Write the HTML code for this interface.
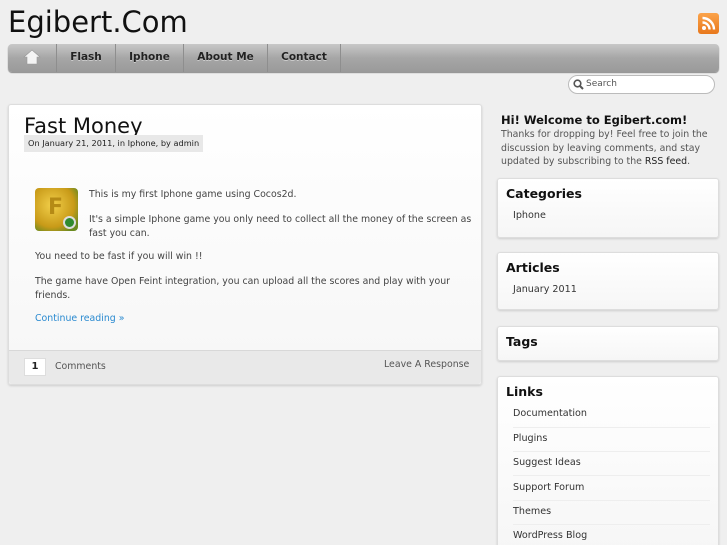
<!DOCTYPE html>
<html style="width:727px;height:545px;overflow:hidden"><head><style>
*{margin:0;padding:0;box-sizing:border-box}
body{width:727px;height:545px;overflow:hidden;background:#efefef;font-family:"DejaVu Sans",sans-serif;color:#444;position:relative}
.a{position:absolute}
#logo{left:8px;top:5px;font-size:29px;color:#111}
#rss{left:698px;top:13px;width:21px;height:21px;border-radius:3px;background:linear-gradient(#fba34a,#e8781c)}
#nav{left:8px;top:44px;width:711px;height:28px;border-radius:4px;background:linear-gradient(#c8c8c8,#a6a6a6 50%,#9a9a9a);box-shadow:0 1px 1px #888}
#nav div{position:absolute;top:0;height:28px;line-height:27px;font-size:10.5px;font-weight:bold;color:#222;text-align:center;border-right:1px solid #8e8e8e;text-shadow:0 1px 0 #ccc}
#search{left:568px;top:75px;width:147px;height:19px;border:1px solid #bbb;border-radius:10px;background:#fff;font-size:9px;color:#555;padding:3px 0 0 17px}
.box{background:linear-gradient(#fff,#f6f6f6);border:1px solid #ddd;border-radius:3px;box-shadow:0 1px 2px #ccc}
#post{left:8px;top:104px;width:474px;height:281px}
p{font-size:9.4px;color:#444}
.side h3{font-size:12.5px;color:#111;font-weight:bold;margin:0 0 0 8px}
.li{font-size:9.6px;color:#333;position:absolute;left:15px}
.sep{position:absolute;left:15px;right:8px;height:1px;background:#eee}
</style></head><body>
<div class="a" id="logo">Egibert.Com</div>
<div class="a" id="rss"><svg width="21" height="21" viewBox="0 0 21 21"><circle cx="6" cy="15" r="2" fill="#fff"/><path d="M4.5 9.5a7 7 0 0 1 7 7M4.5 5a11.5 11.5 0 0 1 11.5 11.5" stroke="#fff" stroke-width="2.4" fill="none"/></svg></div>
<div class="a" id="nav">
<div style="left:0;width:49px"><svg width="18" height="16" viewBox="0 0 18 16" style="margin-top:5px"><path d="M1 8L9 1l8 7h-3v7H4V8z" fill="#f4f4f4" stroke="#999" stroke-width=".6"/></svg></div>
<div style="left:49px;width:59px">Flash</div>
<div style="left:108px;width:68px">Iphone</div>
<div style="left:176px;width:84px">About Me</div>
<div style="left:260px;width:73px">Contact</div>
</div>
<div class="a" id="search"><svg class="a" style="left:4px;top:3px" width="11" height="11" viewBox="0 0 11 11"><circle cx="4.5" cy="4.5" r="3.3" stroke="#555" stroke-width="1.6" fill="none"/><path d="M7 7l3 3" stroke="#555" stroke-width="2"/></svg>Search</div>

<div class="a box" id="post">
<div class="a" style="left:15px;top:9px;font-size:21px;color:#111">Fast Money</div>
<div class="a" style="left:15px;top:30px;background:#e8e8e8;font-size:8.2px;color:#222;padding:3px 4px 4px">On January 21, 2011, in Iphone, by admin</div>
<div class="a" style="left:26px;top:83px;width:43px;height:43px;border-radius:4px;background:radial-gradient(circle at 40% 40%,#f2cf4a,#c89a18 60%,#6a8a20 85%)"><span style="position:absolute;left:13px;top:7px;font-size:22px;font-weight:bold;color:#b58a15">F</span><span style="position:absolute;right:2px;bottom:2px;width:13px;height:13px;border-radius:50%;background:#2f8a2f;border:2px solid #ddd"></span></div>
<p class="a" style="left:80px;top:84px">This is my first Iphone game using Cocos2d.</p>
<p class="a" style="left:80px;top:108px;width:390px;line-height:13.5px">It's a simple Iphone game you only need to collect all the money of the screen as fast you can.</p>
<p class="a" style="left:26px;top:146px">You need to be fast if you will win !!</p>
<p class="a" style="left:26px;top:170px;width:430px;line-height:13.5px">The game have Open Feint integration, you can upload all the scores and play with your friends.</p>
<p class="a" style="left:26px;top:208px;color:#2a8ad0">Continue reading »</p>
<div class="a" style="left:0;top:245px;width:472px;height:34px;background:#e9e9e9;border-top:1px solid #d8d8d8;border-radius:0 0 3px 3px"></div>
<div class="a" style="left:15px;top:253px;width:22px;height:18px;background:#fff;border:1px solid #ddd;font-size:10px;font-weight:bold;color:#222;text-align:center;line-height:16px">1</div>
<p class="a" style="left:46px;top:256px;color:#555">Comments</p>
<p class="a" style="left:375px;top:254px;color:#555">Leave A Response</p>
</div>

<div class="a" style="left:501px;top:113px;font-size:11.5px;font-weight:bold;color:#111">Hi! Welcome to Egibert.com!</div>
<p class="a" style="left:501px;top:128px;width:220px;line-height:13.5px;font-size:9.4px;color:#555">Thanks for dropping by! Feel free to join the discussion by leaving comments, and stay updated by subscribing to the <b style="font-weight:normal;color:#222">RSS feed</b>.</p>

<div class="a box side" style="left:497px;top:178px;width:222px;height:60px"><h3 style="margin-top:7px">Categories</h3><div class="li" style="top:31px">Iphone</div></div>
<div class="a box side" style="left:497px;top:252px;width:222px;height:58px"><h3 style="margin-top:7px">Articles</h3><div class="li" style="top:31px">January 2011</div></div>
<div class="a box side" style="left:497px;top:326px;width:222px;height:35px"><h3 style="margin-top:7px">Tags</h3></div>
<div class="a box side" style="left:497px;top:376px;width:222px;height:180px"><h3 style="margin-top:7px">Links</h3>
<div class="li" style="top:31px">Documentation</div><div class="sep" style="top:50px"></div>
<div class="li" style="top:56px">Plugins</div><div class="sep" style="top:74px"></div>
<div class="li" style="top:80px">Suggest Ideas</div><div class="sep" style="top:98px"></div>
<div class="li" style="top:105px">Support Forum</div><div class="sep" style="top:123px"></div>
<div class="li" style="top:129px">Themes</div><div class="sep" style="top:147px"></div>
<div class="li" style="top:153px">WordPress Blog</div>
</div>
</body></html>
